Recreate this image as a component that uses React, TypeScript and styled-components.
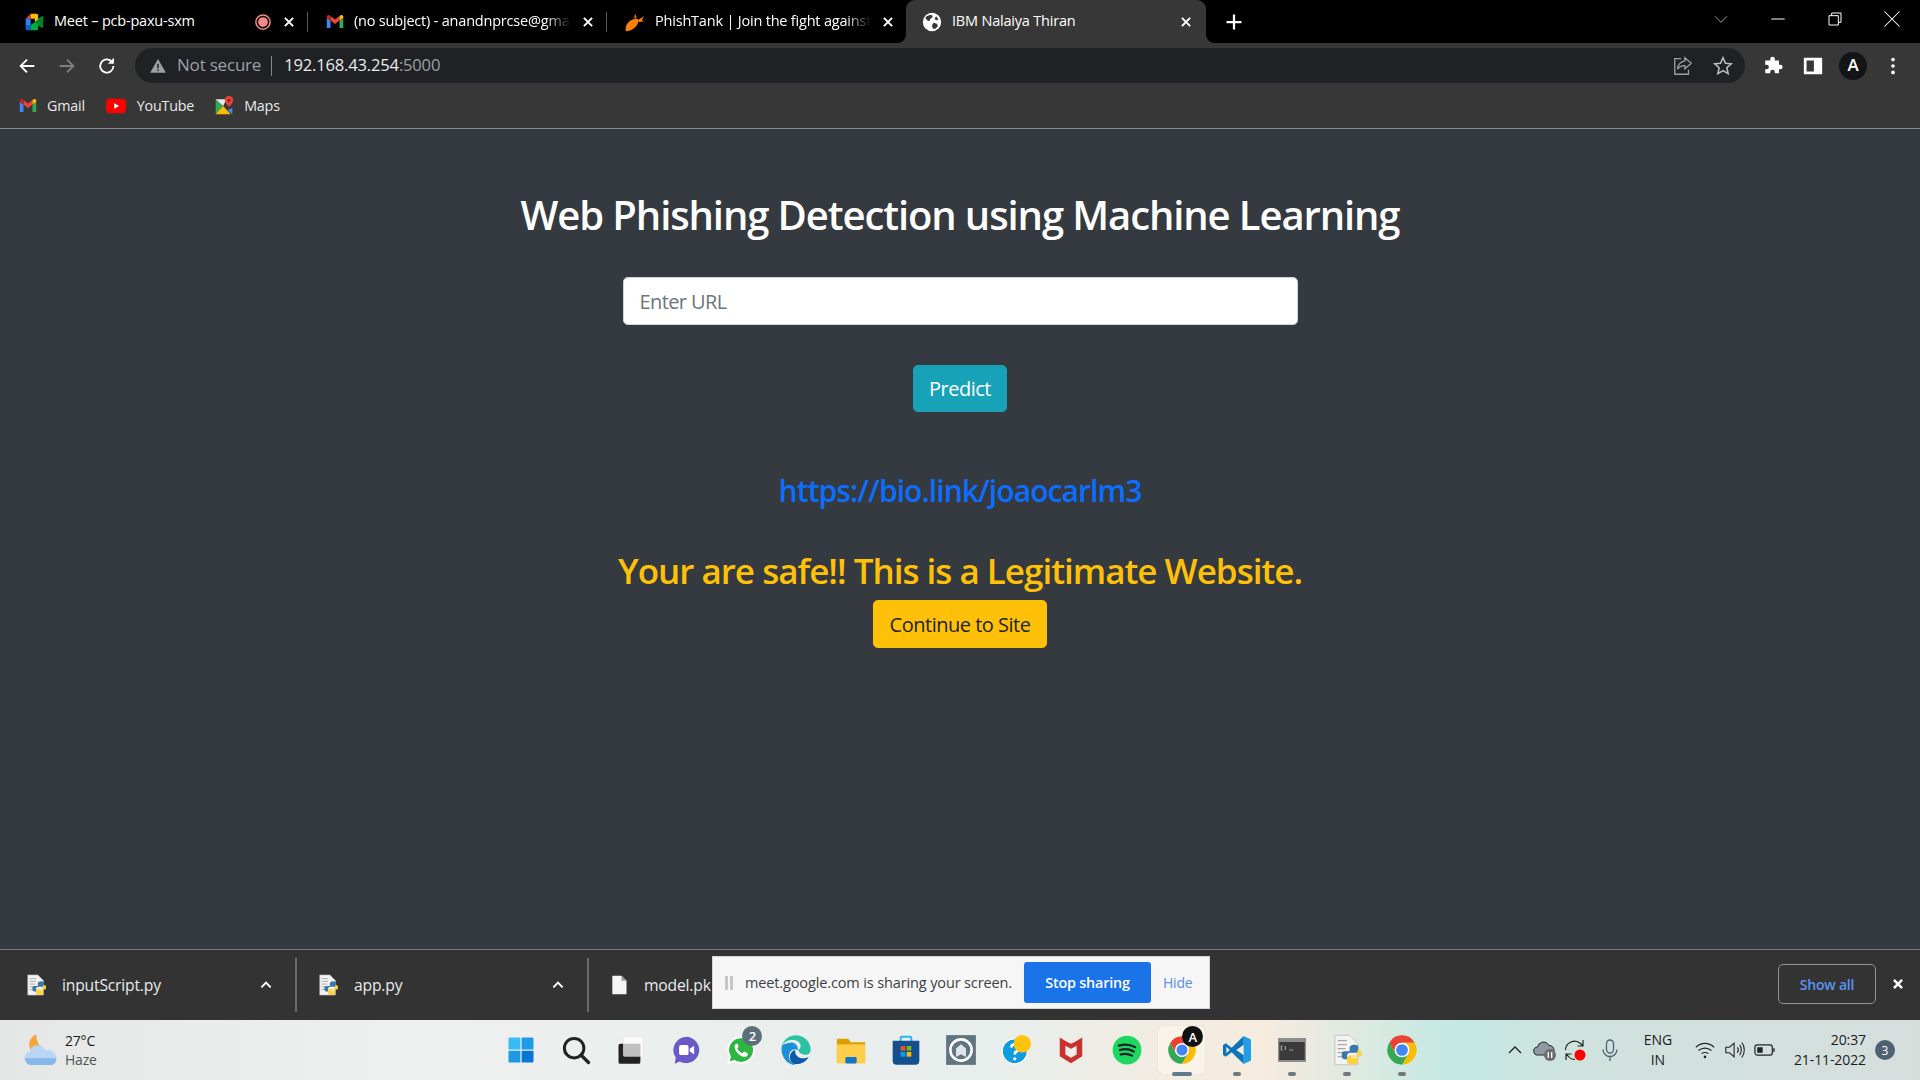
import React from "react";
import styled, { createGlobalStyle } from "styled-components";

const UI = `"Open Sans", "Noto Sans", sans-serif`;

const Global = createGlobalStyle`
  html, body { margin: 0; padding: 0; height: 100%; overflow: hidden; }
  body { font-family: ${UI}; background: #343a40; }
  * { box-sizing: border-box; }
`;

const Screen = styled.div`
  width: 1920px; height: 1080px; display: flex; flex-direction: column; overflow: hidden; position: relative;
`;

/* ---------- tab strip ---------- */
const TabStrip = styled.div`
  height: 43px; background: #000; display: flex; align-items: stretch; padding-left: 6px; flex: none; position: relative; z-index: 1;
`;
const Tab = styled.div<{ $active?: boolean; $w?: number }>`
  width: ${p => p.$w ?? 299}px; height: ${p => (p.$active ? 48 : 43)}px; display: flex; align-items: center; padding: ${p => (p.$active ? "0 13px 5px 16px" : "0 11px 0 18px")};
  gap: 10px; position: relative; color: #fff; font-size: 14.5px; letter-spacing: -0.2px; flex: none;
  background: ${p => (p.$active ? "#373737" : "transparent")};
  border-radius: ${p => (p.$active ? "9px 9px 0 0" : "0")};
  ${p => p.$active ? `
    &::before, &::after { content: ""; position: absolute; bottom: 5px; width: 8px; height: 8px; }
    &::before { left: -8px; background: radial-gradient(circle at 0 0, #000 7.5px, #373737 8px); }
    &::after { right: -8px; background: radial-gradient(circle at 100% 0, #000 7.5px, #373737 8px); }
  ` : ""}
`;
const TabSep = styled.div`
  width: 1px; height: 20px; background: #5a5a5a; align-self: center; flex: none;
`;
const TabTitle = styled.div<{ $fade?: boolean }>`
  flex: 1; white-space: nowrap; overflow: hidden; line-height: 20px; margin-top: -2px;
  ${p => p.$fade ? "mask-image: linear-gradient(90deg, #000 88%, transparent 100%);" : ""}
`;
const Plus = styled.div`
  width: 40px; height: 43px; display: flex; align-items: center; justify-content: center; margin-left: 8px; flex: none;
`;
const WindowControls = styled.div`
  margin-left: auto; display: flex; align-items: center; height: 37px;
`;
const WinBtn = styled.div<{ $w?: number }>`
  width: ${p => p.$w ?? 57}px; height: 37px; display: flex; align-items: center; justify-content: center;
`;

/* ---------- toolbar ---------- */
const Toolbar = styled.div`
  height: 45px; background: #373737; display: flex; align-items: center; padding: 0 0 0 7px; flex: none;
`;
const NavBtn = styled.div`
  width: 40px; height: 40px; display: flex; align-items: center; justify-content: center; flex: none;
`;
const Omnibox = styled.div`
  width: 1610px; height: 35px; margin: 0 8px; border-radius: 18px; background: #202124; display: flex; align-items: center; padding: 0 0 0 14px; flex: none;
`;
const NotSecure = styled.span`
  color: #9aa0a6; font-size: 17px; margin: -2px 0 0 10px; letter-spacing: -0.2px;
`;
const OmniSep = styled.div`
  width: 1px; height: 20px; background: #80868b; margin: 0 12px 0 10px;
`;
const Host = styled.span`
  color: #e8eaed; font-size: 16.6px; letter-spacing: -0.2px; margin-top: -2px;
`;
const Port = styled.span`
  color: #9aa0a6; font-size: 16.6px; letter-spacing: -0.2px; margin-top: -2px;
`;
const OmniActions = styled.div`
  margin-left: auto; display: flex; align-items: center; gap: 0; padding-right: 2px;
`;
const Avatar = styled.div`
  width: 28px; height: 28px; border-radius: 50%; background: #131416; color: #fff; font-size: 17px; font-weight: 600; display: flex; align-items: center; justify-content: center; padding-bottom: 3px;
`;

/* ---------- bookmarks ---------- */
const Bookmarks = styled.div`
  height: 41px; background: #373737; border-bottom: 1px solid #8a8a8a; display: flex; align-items: center; padding: 0 0 4px 19px; flex: none;
`;
const Bookmark = styled.div`
  display: flex; align-items: center; gap: 10px; color: #e8eaed; font-size: 14.3px; letter-spacing: -0.2px; margin-right: 20px; line-height: 18px; padding-bottom: 1px;
`;

/* ---------- page ---------- */
const Main = styled.main`
  flex: 1; background: #343a40; display: flex; flex-direction: column; align-items: center; padding-top: 62px;
`;
const Heading = styled.h1`
  margin: 0 0 38px; font-size: 40px; font-weight: 600; line-height: 48px; color: #fff; letter-spacing: -1.1px; white-space: nowrap;
`;
const UrlInput = styled.input`
  width: 675px; height: 48px; padding: 0 16px; font-family: ${UI}; font-size: 20px; letter-spacing: -0.6px; border: 1px solid #ced4da; border-radius: 4.8px; background: #fff; outline: none; color: #212529;
  &::placeholder { color: #6c757d; opacity: 1; }
`;
const Btn = styled.button<{ $bg: string; $fg: string }>`
  height: 48px; padding: 0 16px; border: 1px solid ${p => p.$bg}; background: ${p => p.$bg}; color: ${p => p.$fg}; border-radius: 4.8px; font-family: ${UI}; font-size: 20px; letter-spacing: -0.5px; display: block;
`;
const PredictBtn = styled(Btn)`
  margin-top: 40px; width: 94px; padding: 0; height: 47px;
`;
const ResultLink = styled.a`
  margin-top: 60px; font-size: 30px; line-height: 38px; color: #0d6efd; font-weight: 600; letter-spacing: -0.92px; text-decoration: none;
`;
const SafeText = styled.h2`
  margin: 39px 0 8px; font-size: 35px; font-weight: 600; line-height: 43px; color: #ffc107; letter-spacing: -1px; white-space: nowrap;
`;

/* ---------- downloads ---------- */
const DownloadBar = styled.div`
  height: 71px; background: #333; border-top: 1px solid #7c7c7c; display: flex; align-items: center; padding-left: 25px; flex: none; position: relative;
`;
const DownloadItem = styled.div<{ $w: number }>`
  width: ${p => p.$w}px; display: flex; align-items: center; gap: 15px; color: #e8eaed; font-size: 15.7px; letter-spacing: -0.2px; flex: none; overflow: hidden; white-space: nowrap;
`;
const Caret = styled.span`
  margin-left: auto; margin-right: 22px; display: flex;
`;
const DownloadSep = styled.div`
  width: 2px; height: 54px; background: #6a6a6a; flex: none; margin-right: 20px;
`;
const ShowAll = styled.div`
  margin-left: auto; width: 98px; height: 40px; margin-bottom: 2px; border: 1px solid #8f9296; border-radius: 5px; font-size: 14px; font-weight: 600; letter-spacing: -0.2px; display: flex; align-items: center; justify-content: center; color: #5a94f0;
`;
const CloseBar = styled.div`
  width: 44px; display: flex; justify-content: center; margin-bottom: 2px;
`;
const ShareBar = styled.div`
  position: absolute; left: 712px; top: 6px; width: 498px; height: 53px; background: #f6f6f6; border: 1px solid #d4d4d4; display: flex; align-items: center; padding-left: 12px;
`;
const Pause = styled.div`
  width: 8px; height: 14px; border-left: 3px solid #c6c6c6; border-right: 3px solid #c6c6c6; flex: none;
`;
const ShareText = styled.span`
  color: #3c4043; font-size: 14.5px; letter-spacing: -0.13px; margin-left: 12px; white-space: nowrap;
`;
const StopBtn = styled.div`
  margin-left: 12px; width: 127px; height: 41px; background: #1a73e8; color: #fff; font-size: 14.4px; font-weight: 600; letter-spacing: -0.2px; border-radius: 3px; display: flex; align-items: center; justify-content: center; flex: none;
`;
const HideBtn = styled.span`
  color: #5a8fe8; font-size: 14px; margin-left: 12px; letter-spacing: -0.2px;
`;

/* ---------- taskbar ---------- */
const Taskbar = styled.footer`
  height: 60px; flex: none; display: grid; grid-template-columns: 493px auto 1fr; align-items: center;
  background: linear-gradient(90deg, #e4e7e6 0%, #eef0ef 20%, #e8eeec 52%, #f3ece1 62%, #f6ebdf 66%, #c4e8e3 75.5%, #cfe2de 82%, #d6dedc 100%);
`;
const Weather = styled.div`
  display: flex; align-items: center; gap: 7px; padding-left: 22px;
`;
const WeatherText = styled.div`
  font-size: 14px; line-height: 19px; color: #1c1c1c; letter-spacing: -0.2px;
`;
const Muted = styled.div`
  color: #555;
`;
const TaskIcons = styled.div`
  display: flex; align-items: center; height: 60px;
`;
const TaskIcon = styled.div<{ $active?: boolean; $dot?: boolean }>`
  width: 55.1px; height: 60px; display: flex; align-items: center; justify-content: center; position: relative; flex: none;
  ${p => p.$active ? `
    &::before { content: ""; position: absolute; left: 4px; right: 4px; top: 6px; bottom: 6px; background: #f9f3ea; border-radius: 5px; box-shadow: 0 0 1px rgba(0,0,0,.2); }
  ` : ""}
  ${p => p.$dot ? `
    &::after { content: ""; position: absolute; left: 50%; bottom: 4px; height: 4px; width: ${p.$active ? 20 : 8}px; transform: translateX(-50%); border-radius: 2px; background: ${p.$active ? "#617a8b" : "#70787c"}; }
  ` : ""}
  & > svg { position: relative; }
`;
const IconBadge = styled.span<{ $bg: string; $size: number }>`
  position: absolute; top: 6px; right: 6px; width: ${p => p.$size}px; height: ${p => p.$size}px; border-radius: 50%; background: ${p => p.$bg}; color: #fff; font-size: 13px; font-weight: 600; display: flex; align-items: center; justify-content: center; z-index: 1;
`;
const Tray = styled.div`
  display: flex; align-items: center; justify-content: flex-end; padding-right: 25px; height: 60px;
`;
const TrayIcon = styled.div<{ $ml?: number }>`
  width: 30px; height: 30px; display: flex; align-items: center; justify-content: center; margin-left: ${p => p.$ml ?? 0}px; flex: none;
`;
const Lang = styled.div`
  width: 50px; margin: 0 7px 0 8px; text-align: center; font-size: 14px; line-height: 20px; color: #1c1c1c; letter-spacing: -0.1px;
`;
const Clock = styled.div`
  margin-left: 14px; text-align: right; font-size: 14px; line-height: 20px; color: #1c1c1c; letter-spacing: -0.1px; white-space: nowrap;
`;
const Notif = styled.div`
  width: 20px; height: 20px; border-radius: 50%; background: #4d6170; color: #fff; font-size: 12px; display: flex; align-items: center; justify-content: center; margin-left: 9px;
`;

/* ---------- icons ---------- */
const I: React.FC<{ s?: number; children: React.ReactNode }> = ({ s = 24, children }) => (
  <svg width={s} height={s} viewBox="0 0 24 24" fill="none">{children}</svg>
);
const Gmail = ({ s = 18 }: { s?: number }) => (
  <I s={s}>
    <path fill="#4285F4" d="M1 20h5V10L1 6.5z" /><path fill="#34A853" d="M18 20h5V6.5L18 10z" />
    <path fill="#EA4335" d="M6 10l6 4.5L18 10V4l-6 4.5L6 4z" />
    <path fill="#C5221F" d="M1 6.5L6 10V4L4.4 2.9C2.9 1.9 1 3 1 4.8z" />
    <path fill="#FBBC04" d="M18 4v6l5-3.5V4.8c0-1.8-1.9-2.9-3.4-1.9z" />
  </I>
);
const Meet = () => (
  <I s={20}>
    <path fill="#00832D" d="M13 12l3.5 4 4.7 3c.8.5 1.8-.1 1.8-1V6c0-.9-1-1.5-1.8-1l-4.7 3z" />
    <path fill="#0066DA" d="M2 16v4c0 1 .9 2 2 2h4v-6z" /><path fill="#E94235" d="M8 2L2 8h6z" />
    <path fill="#2684FC" d="M2 8h6v8H2z" /><path fill="#00AC47" d="M8 16v6h7c1.1 0 2-.9 2-2v-5l-4-3z" />
    <path fill="#FFBA00" d="M15 2H8v6h5v4l4-3V4c0-1.1-.9-2-2-2z" />
  </I>
);
const Rec = () => (
  <I s={18}><circle cx="12" cy="12" r="9.5" stroke="#f28b82" strokeWidth="2" /><circle cx="12" cy="12" r="6.5" fill="#f28b82" /></I>
);
const Cross = ({ s = 16, w = 2 }: { s?: number; w?: number }) => (
  <I s={s}><path d="M5 5l14 14M19 5L5 19" stroke="#fff" strokeWidth={w * 24 / s} /></I>
);
const Fish = () => (
  <I s={20}>
    <path fill="#ff7d00" d="M1 23c-1-5 1-10 6-13l5-2c3-.5 4 1 4 3 0 5-7 12-15 12z" />
    <path fill="#ff7d00" d="M11 8l1-6 2 4zM15 10l8-5-3 5 3 1-6 1z" />
  </I>
);
const Globe = () => (
  <I s={20}>
    <circle cx="12" cy="12" r="11" fill="#fff" />
    <path fill="#373737" d="M4 7c2-3 6-4 8-3l1 2-3 2-1 3-3-1zM14 13l4 1 1 3-3 3-3 0-1-4zM17 5l3 4-3 1-2-2z" />
  </I>
);
const Back = ({ c = "#fff" }: { c?: string }) => (
  <I s={22}><path d="M20 12H5M12 5l-7 7 7 7" stroke={c} strokeWidth="2" /></I>
);
const Forward = () => (
  <I s={22}><path d="M4 12h15M12 5l7 7-7 7" stroke="#7f7f7f" strokeWidth="2" /></I>
);
const Reload = () => (
  <I s={22}><path d="M19 12a7.2 7.2 0 1 1-2.2-5.2" stroke="#fff" strokeWidth="2" /><path fill="#fff" d="M19.5 3v6.5H13z" /></I>
);
const Warn = () => (
  <I s={18}><path fill="#9aa0a6" d="M12 2.5L1.5 21h21zM11 9h2v6h-2zm0 7.5h2v2h-2z" fillRule="evenodd" /></I>
);
const Share = () => (
  <I s={22}>
    <path d="M10 4H3v17h15v-5" stroke="#9aa0a6" strokeWidth="1.4" />
    <path d="M14 3l7 6-7 6v-3.5c-4 0-6 1-8 4 .5-5 3-8 8-9z" stroke="#9aa0a6" strokeWidth="1.4" />
  </I>
);
const Star = () => (
  <I s={22}><path d="M12 3l2.7 6 6.3.6-4.8 4.3 1.4 6.4L12 17l-5.6 3.3 1.4-6.4L3 9.6 9.3 9z" stroke="#bdbdbd" strokeWidth="1.7" /></I>
);
const Puzzle = () => (
  <I s={22}><path fill="#fff" d="M9 4.5a2.5 2.5 0 0 1 5 0V6h4.5v4.5H20a2.5 2.5 0 0 1 0 5h-1.5V20H14v-1.5a2.5 2.5 0 0 0-5 0V20H3.5v-4.5H5a2.5 2.5 0 0 0 0-5H3.5V6H9z" /></I>
);
const SidePanel = () => (
  <I s={22}><path fill="#fff" fillRule="evenodd" d="M2 3h20v18H2zm3 3v12h8V6z" /></I>
);
const Dots = () => (
  <I s={22}><circle cx="12" cy="5" r="2" fill="#fff" /><circle cx="12" cy="12" r="2" fill="#fff" /><circle cx="12" cy="19" r="2" fill="#fff" /></I>
);
const Youtube = () => (
  <I s={22}><rect x="1" y="4" width="22" height="16" rx="4.5" fill="#f00" /><path fill="#fff" d="M10 9l5.5 3-5.5 3z" /></I>
);
const Maps = () => (
  <I s={20}>
    <path fill="#34A853" d="M2 4v18l9-10z" /><path fill="#FBBC04" d="M2 22h18L11 12z" />
    <path fill="#4285F4" d="M22 22V14l-6 3z" /><path fill="#e8eaed" d="M2 4h13l-4 8z" />
    <path fill="#EA4335" d="M18 0a5 5 0 0 0-5 5c0 3 5 8 5 8s5-5 5-8a5 5 0 0 0-5-5z" /><circle cx="18" cy="5" r="1.8" fill="#8a1c14" />
  </I>
);
const Chevron = ({ c = "#fff", s = 14, w = 2 }: { c?: string; s?: number; w?: number }) => (
  <I s={s}><path d="M4 16l8-8 8 8" stroke={c} strokeWidth={w * 24 / s} /></I>
);
const PyFile = ({ s = 22 }: { s?: number }) => (
  <I s={s}>
    <path fill="#f3f3f3" stroke="#bbb" strokeWidth=".6" d="M3 1h11l6 6v16H3z" />
    <path stroke="#aaa" d="M5 5h7M5 8h7M5 11h6M5 14h5M5 17h5" />
    <path fill="#3a76a8" d="M15 9c-3 0-4 1-4 2.5V14H7c-1.5 0-2 1.2-2 3s1 3 2 3h2v-2.5c0-1.3 1-2.5 2.5-2.5h4c1.2 0 2-.8 2-2v-2.5C17.5 10 16.5 9 15 9z" transform="translate(3 -1)" />
    <path fill="#fdd23e" d="M16 23c3 0 4-1 4-2.5V18h-5v-1h6.5c1 0 1.5-1 1.5-2.5S22 12 21 12h-1v2c0 1.2-1 2.2-2.3 2.2h-3.9c-1.1 0-1.8.8-1.8 2v2.4c0 1.4 1.500 2.400 4 2.400z" />
  </I>
);
const BlankFile = () => (
  <I s={20}><path fill="#f5f5f5" d="M4 1h11l6 6v16H4z" /><path fill="#9a9a9a" d="M15 1v6h6z" /></I>
);
const WeatherIcon = () => (
  <I s={36}>
    <path fill="#f4a63a" d="M9.500 1.500C5 3.500 3.500 8.500 6 12.500l9-.5c-3-2-5.500-5.500-5.500-10.500z" />
    <path fill="#b9d6f4" d="M6 22a4.500 4.500 0 0 1-1-8.800 5.500 5.500 0 0 1 10.500-.9A4.900 4.900 0 0 1 19.500 22z" />
    <path fill="#86b6ea" d="M1.700 17.500c.8 2.800 2.600 4.500 4.300 4.500h13.500c1.800 0 3.200-1.500 3.600-4.500z" />
  </I>
);
const WinLogo = () => (
  <I s={30}>
    <path fill="#37bdf6" d="M2 3a1 1 0 0 1 1-1h8.500v9.500H2z" /><path fill="#1f9be8" d="M12.500 2H21a1 1 0 0 1 1 1v8.500h-9.500z" />
    <path fill="#1d9ae6" d="M2 12.500h9.500V22H3a1 1 0 0 1-1-1z" /><path fill="#0877d4" d="M12.500 12.500H22V21a1 1 0 0 1-1 1h-8.500z" />
  </I>
);
const SearchIcon = () => (
  <I s={30}><circle cx="10.500" cy="10.500" r="7.800" stroke="#222" strokeWidth="2.400" /><path d="M16 16l6 6" stroke="#222" strokeWidth="2.600" strokeLinecap="round" /></I>
);
const TaskView = () => (
  <I s={30}>
    <rect x="2" y="7" width="17.500" height="16" rx="1.500" fill="#222" />
    <rect x="6" y="1" width="16" height="16" rx="1" fill="#f8f8f8" stroke="#ddd" strokeWidth=".4" />
    <rect x="6" y="7" width="13.500" height="10" fill="#bfbfbf" />
  </I>
);
const Teams = () => (
  <I s={30}>
    <path fill="#6a5ac8" d="M12 1.500a10.500 10.500 0 1 1-5 19.700L3 23l.8-5A10.500 10.500 0 0 1 12 1.500z" />
    <rect x="6.500" y="8" width="7.500" height="8" rx="1.500" fill="#fff" /><path fill="#fff" d="M15 11l3.500-2.500v7L15 13z" />
  </I>
);
const Whatsapp = () => (
  <I s={30}>
    <path fill="#fff" d="M12 1a11 11 0 0 0-9.500 16.500L1 23l5.700-1.500A11 11 0 1 0 12 1z" />
    <path fill="#2bb741" d="M12 2.500a9.500 9.500 0 0 0-8 14.600L3 21l4-1a9.500 9.500 0 1 0 5-17.500z" />
    <path fill="#fff" d="M8.500 7c-1 0-2 1.500-1.500 3.500 1 3 3.500 5.800 6.800 6.800 2 .5 3.400-.5 3.700-1.800 0-.6 0-1-.5-1.200l-2-1c-.5-.2-.8 0-1 .3l-.8 1c-2-.7-3.400-2-4.200-4l.8-.8c.3-.4.300-.7.100-1.100l-.8-1.900C9 7 8.800 7 8.500 7z" />
  </I>
);
const Edge = () => (
  <I s={32}>
    <path fill="#0c59a4" d="M21.500 17c-2.500 1.500-6 1.500-8 0-1.700-1-2.500-3-2-5-3 1-4.500 3.500-4 6.500.4 1.800 1.500 3.200 3 4 5 .5 9-1.500 11-5.500z" />
    <path fill="#2bc4a0" d="M12 1C7 1 3 4 1.500 8.500 3 6 6 4.500 9.500 4.500c3.500 0 6 2 6 4.500 0 1.500-1 2.500-2 3 1 2.500 3.500 4 6.500 3.500 2.300-.4 3-2 3-4C23 6 18 1 12 1z" />
    <path fill="#1b8fd8" d="M1.500 8.500C0 14 3 20.500 8 22.500c1.500.6 3 .8 4 .5-4-1-6-4.500-5-8 .5-2.500 3-4.500 6.500-3 0-4-3-6-6-5.500-2.500.3-4.800 1-6 2z" />
  </I>
);
const Folder = () => (
  <I s={34}>
    <path fill="#d9a000" d="M2 4h8l2 2.500h10V20H2z" />
    <path fill="#ffce49" d="M2 8h20v13.500H2z" />
    <rect x="8" y="17" width="8" height="4.500" rx="1" fill="#0f78c8" />
  </I>
);
const Store = () => (
  <I s={32}>
    <path d="M8 6V3a1 1 0 0 1 1-1h6a1 1 0 0 1 1 1v3" stroke="#2ab6ef" strokeWidth="1.500" />
    <path fill="#14508f" d="M2 5h20v15a3 3 0 0 1-3 3H5a3 3 0 0 1-3-3z" />
    <path fill="#f25022" d="M8 9h3.500v3.500H8z" /><path fill="#7fba00" d="M12.500 9H16v3.500h-3.500z" />
    <path fill="#00a4ef" d="M8 13.500h3.500V17H8z" /><path fill="#ffb900" d="M12.500 13.500H16V17h-3.500z" />
  </I>
);
const GreyApp = () => (
  <I s={34}>
    <rect x="1.500" y="1.500" width="21" height="21" fill="#5f7582" /><circle cx="12" cy="12" r="7.500" stroke="#fff" strokeWidth="1.800" />
    <path fill="#dfe5e8" d="M8.500 17v-6l3.500-3 3.500 3v6L12 15z" />
  </I>
);
const HelpIcon = () => (
  <I s={30}>
    <circle cx="11" cy="13" r="10" fill="#0f9be0" stroke="#fff" strokeWidth="1" />
    <path d="M8 10a3 3 0 1 1 4.500 3c-1 .6-1.500 1-1.500 2.500" stroke="#fff" strokeWidth="2.200" /><circle cx="11" cy="19" r="1.300" fill="#fff" />
    <circle cx="17" cy="7" r="7" fill="#ffc40e" />
  </I>
);
const McAfee = () => (
  <I s={30}><path fill="#c8312d" fillRule="evenodd" d="M3 2l6 3.500 3 1.500 3-1.500 6-3.500V17l-9 5.500L3 17zM7.500 8.500v7l4.500 2.700 4.500-2.700v-7L12 11z" /></I>
);
const Spotify = () => (
  <I s={30}>
    <circle cx="12" cy="12" r="11.500" fill="#1ed760" />
    <path d="M5.500 8.500c4-1.200 9-1 13 1.200M6.300 12c3.500-1 7.800-.7 11 1.200M7 15.500c3-.8 6.300-.5 9 1" stroke="#15202b" strokeWidth="1.800" strokeLinecap="round" />
  </I>
);
const Chrome = ({ s = 30 }: { s?: number }) => (
  <I s={s}>
    <path fill="#EA4335" d="M12 6.500H21.530A11 11 0 0 0 2.470 6.500L7.240 14.750A5.500 5.500 0 0 1 12 6.500z" />
    <path fill="#FBBC04" d="M16.760 14.750 12 23A11 11 0 0 0 21.530 6.500H12A5.500 5.500 0 0 1 16.760 14.750z" />
    <path fill="#34A853" d="M7.240 14.750 2.470 6.500A11 11 0 0 0 12 23L16.760 14.750A5.500 5.500 0 0 1 7.240 14.750z" />
    <circle cx="12" cy="12" r="5.500" fill="#fff" /><circle cx="12" cy="12" r="4.400" fill="#4285F4" />
  </I>
);
const VSCode = () => (
  <I s={32}>
    <path fill="#1f9fe8" d="M17 1.500l5.500 2.700v15.600L17 22.500z" />
    <path fill="#0c74bd" fillRule="evenodd" d="M17 1.500L8 10.300 3.600 7 1.500 8.200v7.600L3.600 17 8 13.700l9 8.800V16l-5.500-4L17 8zM4 9.500L6.500 12 4 14.500z" />
  </I>
);
const Terminal = () => (
  <I s={32}>
    <rect x="1.500" y="3" width="21" height="18" fill="#8d8d8d" /><rect x="2.500" y="6" width="19" height="13.500" fill="#3a3a3a" />
    <path d="M5 9H4v3h1M7 9v3M10 12h3" stroke="#a0a0a0" strokeWidth=".9" />
  </I>
);
const Wifi = () => (
  <I s={22}><path d="M2 9c6-5.500 14-5.500 20 0M5 12.500c4-3.500 10-3.500 14 0M8.300 16c2-1.700 5.400-1.700 7.400 0" stroke="#222" strokeWidth="1.300" /><circle cx="12" cy="19.500" r="1.400" fill="#222" /></I>
);
const Volume = () => (
  <I s={22}><path d="M2 9v6h4l5 4.500v-15L6 9z" stroke="#222" strokeWidth="1.200" /><path d="M14.500 9c1.300 1.700 1.300 4.300 0 6M17 6.500c2.500 3 2.500 8 0 11M19.500 4c3.500 4.500 3.500 11.500 0 16" stroke="#222" strokeWidth="1.200" /></I>
);
const Battery = () => (
  <I s={22}><rect x="1" y="6.500" width="19" height="11" rx="2.500" stroke="#222" strokeWidth="1.300" /><rect x="3.500" y="9" width="6" height="6" fill="#222" /><path fill="#222" d="M21 10h1.500v4H21z" /></I>
);
const Mic = () => (
  <I s={24}><rect x="8.500" y="2" width="7" height="13" rx="3.500" stroke="#4b6272" strokeWidth="1.300" /><path d="M5 11.500a7 7 0 0 0 14 0M12 18.500V23" stroke="#4b6272" strokeWidth="1.300" /></I>
);
const CloudPause = () => (
  <I s={24}>
    <path fill="#8f9aa0" stroke="#222" strokeWidth="1" d="M5 17a4 4 0 0 1-.5-8 6 6 0 0 1 11.300-1.500A4.800 4.800 0 0 1 21 13h-6v4z" />
    <circle cx="17" cy="17" r="6" fill="#6c6c6c" /><path d="M15.300 14v6M18.700 14v6" stroke="#fff" strokeWidth="1.300" />
  </I>
);
const SyncRec = () => (
  <I s={24}>
    <path d="M2.500 12a9 9 0 0 1 15-6.500L20 8M20 2v6h-5.500M12 21.500A9 9 0 0 1 5 18l-2-2M3 22v-6h5.500" stroke="#222" strokeWidth="1.200" />
    <circle cx="17" cy="17" r="5.500" fill="#f00" />
  </I>
);

const icons: { node: React.ReactNode; dot?: boolean; active?: boolean; badge?: { t: string; bg: string; size: number } }[] = [
  { node: <WinLogo /> }, { node: <SearchIcon /> }, { node: <TaskView /> }, { node: <Teams /> },
  { node: <Whatsapp />, badge: { t: "2", bg: "#5c707c", size: 20 } },
  { node: <Edge /> }, { node: <Folder /> }, { node: <Store /> }, { node: <GreyApp /> },
  { node: <HelpIcon /> }, { node: <McAfee /> }, { node: <Spotify /> },
  { node: <Chrome />, active: true, dot: true, badge: { t: "A", bg: "#111", size: 21 } },
  { node: <VSCode />, dot: true }, { node: <Terminal />, dot: true },
  { node: <PyFile s={32} />, dot: true }, { node: <Chrome s={32} />, dot: true },
];

export default function App() {
  return (
    <Screen>
      <Global />
      <TabStrip>
        <Tab $w={301}>
          <Meet /><TabTitle>Meet – pcb-paxu-sxm</TabTitle><Rec /><Cross s={14} />
        </Tab>
        <TabSep />
        <Tab $w={298}><Gmail /><TabTitle $fade>(no subject) - anandnprcse@gma</TabTitle><Cross s={14} /></Tab>
        <TabSep />
        <Tab><Fish /><TabTitle $fade>PhishTank | Join the fight against</TabTitle><Cross s={14} /></Tab>
        <Tab $active $w={300}><Globe /><TabTitle>IBM Nalaiya Thiran</TabTitle><Cross s={14} /></Tab>
        <Plus><I s={18}><path d="M12 2v20M2 12h20" stroke="#fff" strokeWidth="3" /></I></Plus>
        <WindowControls>
          <WinBtn><I s={16}><path d="M3 8l9 9 9-9" stroke="#aaa" strokeWidth="1.400" /></I></WinBtn>
          <WinBtn><I s={16}><path d="M2 12h20" stroke="#fff" strokeWidth="1.500" /></I></WinBtn>
          <WinBtn>
            <I s={16}><path d="M3 7h14v14H3zM7 7V3h14v14h-4" stroke="#fff" strokeWidth="1.500" /></I>
          </WinBtn>
          <WinBtn><I s={18}><path d="M2 2l20 20M22 2L2 22" stroke="#fff" strokeWidth="1.400" /></I></WinBtn>
        </WindowControls>
      </TabStrip>

      <Toolbar>
        <NavBtn><Back /></NavBtn>
        <NavBtn><Forward /></NavBtn>
        <NavBtn><Reload /></NavBtn>
        <Omnibox>
          <Warn />
          <NotSecure>Not secure</NotSecure>
          <OmniSep />
          <Host>192.168.43.254</Host><Port>:5000</Port>
          <OmniActions>
            <NavBtn><Share /></NavBtn>
            <NavBtn><Star /></NavBtn>
          </OmniActions>
        </Omnibox>
        <NavBtn><Puzzle /></NavBtn>
        <NavBtn><SidePanel /></NavBtn>
        <NavBtn><Avatar>A</Avatar></NavBtn>
        <NavBtn><Dots /></NavBtn>
      </Toolbar>

      <Bookmarks>
        <Bookmark><Gmail />Gmail</Bookmark>
        <Bookmark><Youtube />YouTube</Bookmark>
        <Bookmark><Maps />Maps</Bookmark>
      </Bookmarks>

      <Main>
        <Heading>Web Phishing Detection using Machine Learning</Heading>
        <UrlInput placeholder="Enter URL" />
        <PredictBtn $bg="#17a2b8" $fg="#fff">Predict</PredictBtn>
        <ResultLink href="#">https://bio.link/joaocarlm3</ResultLink>
        <SafeText>Your are safe!! This is a Legitimate Website.</SafeText>
        <Btn $bg="#ffc107" $fg="#212529">Continue to Site</Btn>
      </Main>

      <DownloadBar>
        <DownloadItem $w={270}><PyFile /><span>inputScript.py</span><Caret><Chevron /></Caret></DownloadItem>
        <DownloadSep />
        <DownloadItem $w={270}><PyFile /><span>app.py</span><Caret><Chevron /></Caret></DownloadItem>
        <DownloadSep />
        <DownloadItem $w={103}><BlankFile /><span>model.pk</span></DownloadItem>
        <ShareBar>
          <Pause />
          <ShareText>meet.google.com is sharing your screen.</ShareText>
          <StopBtn>Stop sharing</StopBtn>
          <HideBtn>Hide</HideBtn>
        </ShareBar>
        <ShowAll>Show all</ShowAll>
        <CloseBar><Cross s={14} w={2.5} /></CloseBar>
      </DownloadBar>

      <Taskbar>
        <Weather>
          <WeatherIcon />
          <WeatherText>27°C<Muted>Haze</Muted></WeatherText>
        </Weather>
        <TaskIcons>
          {icons.map((ic, i) => (
            <TaskIcon key={i} $active={ic.active} $dot={ic.dot}>
              {ic.node}
              {ic.badge && <IconBadge $bg={ic.badge.bg} $size={ic.badge.size}>{ic.badge.t}</IconBadge>}
            </TaskIcon>
          ))}
        </TaskIcons>
        <Tray>
          <TrayIcon><Chevron c="#222" s={18} w={1.300} /></TrayIcon>
          <TrayIcon><CloudPause /></TrayIcon>
          <TrayIcon><SyncRec /></TrayIcon>
          <TrayIcon $ml={5}><Mic /></TrayIcon>
          <Lang>ENG<br />IN</Lang>
          <TrayIcon><Wifi /></TrayIcon>
          <TrayIcon><Volume /></TrayIcon>
          <TrayIcon><Battery /></TrayIcon>
          <Clock>20:37<br />21-11-2022</Clock>
          <Notif>3</Notif>
        </Tray>
      </Taskbar>
    </Screen>
  );
}
